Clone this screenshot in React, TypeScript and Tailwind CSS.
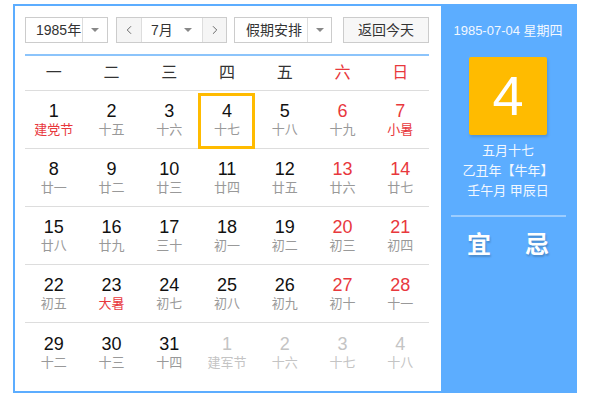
import { ChevronLeft, ChevronRight } from "lucide-react";

type Day = {
  n: number;
  lunar: string;
  red?: boolean;
  festival?: boolean;
  other?: boolean;
  selected?: boolean;
};

const weeks: Day[][] = [
  [
    { n: 1, lunar: "建党节", festival: true },
    { n: 2, lunar: "十五" },
    { n: 3, lunar: "十六" },
    { n: 4, lunar: "十七", selected: true },
    { n: 5, lunar: "十八" },
    { n: 6, lunar: "十九", red: true },
    { n: 7, lunar: "小暑", red: true, festival: true },
  ],
  [
    { n: 8, lunar: "廿一" },
    { n: 9, lunar: "廿二" },
    { n: 10, lunar: "廿三" },
    { n: 11, lunar: "廿四" },
    { n: 12, lunar: "廿五" },
    { n: 13, lunar: "廿六", red: true },
    { n: 14, lunar: "廿七", red: true },
  ],
  [
    { n: 15, lunar: "廿八" },
    { n: 16, lunar: "廿九" },
    { n: 17, lunar: "三十" },
    { n: 18, lunar: "初一" },
    { n: 19, lunar: "初二" },
    { n: 20, lunar: "初三", red: true },
    { n: 21, lunar: "初四", red: true },
  ],
  [
    { n: 22, lunar: "初五" },
    { n: 23, lunar: "大暑", festival: true },
    { n: 24, lunar: "初七" },
    { n: 25, lunar: "初八" },
    { n: 26, lunar: "初九" },
    { n: 27, lunar: "初十", red: true },
    { n: 28, lunar: "十一", red: true },
  ],
  [
    { n: 29, lunar: "十二" },
    { n: 30, lunar: "十三" },
    { n: 31, lunar: "十四" },
    { n: 1, lunar: "建军节", other: true },
    { n: 2, lunar: "十六", other: true },
    { n: 3, lunar: "十七", other: true },
    { n: 4, lunar: "十八", other: true },
  ],
];

const weekdays = ["一", "二", "三", "四", "五", "六", "日"];

function Caret() {
  return (
    <span className="block h-0 w-0 border-x-[4px] border-t-[4px] border-x-transparent border-t-[#888]" />
  );
}

function DayCell({ day }: { day: Day }) {
  let numColor = "text-[#111]";
  let lunarColor = "text-[#999]";
  if (day.red) numColor = "text-[#e8383d]";
  if (day.festival) lunarColor = "text-[#e8383d]";
  if (day.other) {
    numColor = "text-[#c4c4c4]";
    lunarColor = "text-[#c4c4c4]";
  }
  return (
    <div className="relative flex flex-col items-center justify-center">
      {day.selected ? (
        <div className="absolute left-0 right-[1px] top-[2px] bottom-[-1px] border-[3px] border-[#ffbb00]" />
      ) : null}
      <span className={`text-[18px] leading-[20px] ${numColor}`}>{day.n}</span>
      <span className={`mt-[1px] text-[13px] leading-[16px] ${lunarColor}`}>{day.lunar}</span>
    </div>
  );
}

export default function App() {
  return (
    <div
      className="ml-[13px] mt-[4px] flex h-[389px] w-[564px] border-2 border-[#5cadff] bg-white"
      style={{ fontFamily: '"Liberation Sans", Arial, "Noto Sans CJK SC", sans-serif' }}
    >
      <div className="w-[426px] pl-[10px] pr-[12px] pt-[11px]">
        <div className="flex h-[26px] items-stretch whitespace-nowrap text-[14px] text-[#333]">
          <div className="flex w-[83px] border border-[#ccc]">
            <span className="flex flex-1 items-center pl-[10px]">1985年</span>
            <span className="flex w-[25px] shrink-0 items-center justify-center border-l border-[#ddd]">
              <Caret />
            </span>
          </div>
          <div className="ml-[8px] flex w-[111px] border border-[#ccc]">
            <span className="flex w-[25px] items-center justify-center border-r border-[#ddd] bg-[#f5f5f5]">
              <ChevronLeft size={14} strokeWidth={1.5} color="#555" />
            </span>
            <span className="flex flex-1 items-center justify-between pl-[9px] pr-[10px]">
              7月
              <Caret />
            </span>
            <span className="flex w-[24px] items-center justify-center border-l border-[#ddd] bg-[#f5f5f5]">
              <ChevronRight size={14} strokeWidth={1.5} color="#555" />
            </span>
          </div>
          <div className="ml-[7px] flex w-[98px] border border-[#ccc]">
            <span className="flex flex-1 items-center pl-[11px]">假期安排</span>
            <span className="flex w-[24px] shrink-0 items-center justify-center border-l border-[#ddd]">
              <Caret />
            </span>
          </div>
          <div className="ml-[11px] flex w-[86px] items-center justify-center border border-[#ccc] bg-[#f7f7f7]">
            返回今天
          </div>
        </div>

        <div className="mt-[11px] h-[2px] bg-[#8cc4fb]" />

        <div className="grid h-[35px] grid-cols-7 border-b border-[#ddd] text-[16px]">
          {weekdays.map((w, i) => (
            <div
              key={w}
              className={`flex items-center justify-center ${i >= 5 ? "text-[#e8383d]" : "text-[#333]"}`}
            >
              {w}
            </div>
          ))}
        </div>

        {weeks.map((week, i) => (
          <div
            key={i}
            className={`grid h-[58px] grid-cols-7 ${i < weeks.length - 1 ? "border-b border-[#ddd]" : ""}`}
          >
            {week.map((day, j) => (
              <DayCell key={j} day={day} />
            ))}
          </div>
        ))}
      </div>

      <div className="flex flex-1 flex-col items-center bg-[#5cadff] text-[#f3f8ff]">
        <div className="mt-[16px] text-[13px] leading-[18px]">1985-07-04 星期四</div>
        <div className="mt-[17px] flex h-[78px] w-[78px] items-center justify-center rounded-[2px] bg-[#ffbb00] text-[56px] leading-none text-white shadow-[1px_2px_3px_rgba(0,0,0,0.15)]">
          4
        </div>
        <div className="mt-[6px] text-center text-[13px] leading-[20px]">
          <div>五月十七</div>
          <div>乙丑年【牛年】</div>
          <div>壬午月 甲辰日</div>
        </div>
        <div className="mt-[14px] h-[2px] w-[115px] bg-[#9ccdff]" />
        <div className="mt-[16px] flex gap-[34px] text-[24px] font-bold leading-[24px] text-white [text-shadow:1px_2px_2px_rgba(0,0,0,0.2)]">
          <span>宜</span>
          <span>忌</span>
        </div>
      </div>
    </div>
  );
}
